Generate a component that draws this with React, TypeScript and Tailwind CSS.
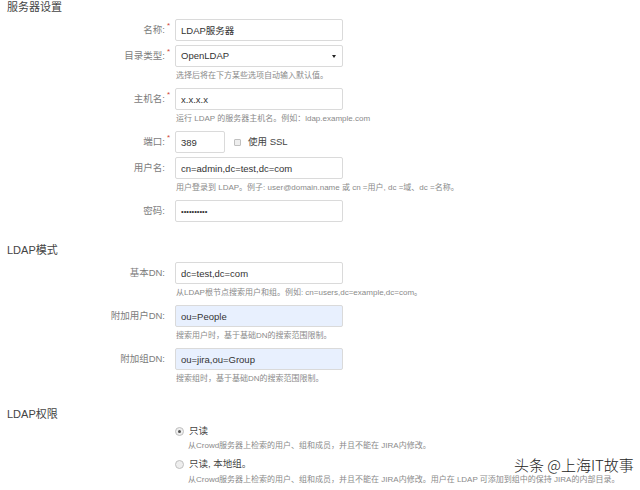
import React from "react";

type FieldProps = {
  label: string;
  required?: boolean;
  hint?: string;
  children: React.ReactNode;
};

const Field = ({ label, required, hint, children }: FieldProps) => {
  return (
    <div>
      <div className="flex h-[22px] items-center">
        <div className="w-[165px] text-right text-[9.5px] text-[#7c7c7c]">{label}</div>
        <div className="h-full w-[10px] self-start">
          {required && (
            <span className="ml-[2px] block pt-[3px] text-[8px] leading-none text-[#d04437]">*</span>
          )}
        </div>
        {children}
      </div>
      {hint && (
        <div className="h-[17px] whitespace-nowrap pl-[176px] text-[8px] leading-[17px] text-[#8a8a8a]">
          {hint}
        </div>
      )}
    </div>
  );
};

const TextInput = ({
  value,
  width = "w-[168px]",
  autofill,
  type = "text",
  size = "text-[9.5px]",
}: {
  value: string;
  width?: string;
  autofill?: boolean;
  type?: string;
  size?: string;
}) => (
  <input
    readOnly
    type={type}
    defaultValue={value}
    className={`${width} ${size} h-[22px] rounded-[2px] border border-[#dadada] pl-[5px] text-[#333] outline-none ${
      autofill ? "bg-[#e8f0fe]" : "bg-white"
    }`}
  />
);

const Heading = ({ children, className = "" }: { children: React.ReactNode; className?: string }) => (
  <div className={`h-[15px] pl-[7px] text-[11px] leading-[15px] text-[#444] ${className}`}>{children}</div>
);

const Radio = ({ checked, label }: { checked?: boolean; label: string }) => (
  <div className="flex h-[14px] items-center pl-[175px]">
    <span className="flex h-[9px] w-[9px] items-center justify-center rounded-full border border-[#c0c0c0] bg-[#eeeeee]">
      {checked && <span className="h-[3px] w-[3px] rounded-full bg-[#555]" />}
    </span>
    <span className="ml-[5px] text-[9.5px] text-[#444]">{label}</span>
  </div>
);

export default function App() {
  return (
    <div className="relative h-[490px] w-[640px] overflow-hidden bg-white font-['Liberation_Sans','Noto_Sans_CJK_SC',sans-serif]">
      <Heading>服务器设置</Heading>
      <div className="mt-[4px] flex flex-col gap-[4px]">
        <Field label="名称:" required>
          <TextInput value="LDAP服务器" />
        </Field>
        <Field label="目录类型:" required hint="选择后将在下方某些选项自动输入默认值。">
          <div className="flex h-[22px] w-[168px] items-center justify-between rounded-[2px] border border-[#dadada] bg-white pl-[5px] pr-[6px] text-[9.5px] text-[#333]">
            <span>OpenLDAP</span>
            <span className="h-0 w-0 border-l-[2.5px] border-r-[2.5px] border-t-[3.5px] border-l-transparent border-r-transparent border-t-[#222]" />
          </div>
        </Field>
        <Field label="主机名:" required hint="运行 LDAP 的服务器主机名。例如：ldap.example.com">
          <TextInput value="x.x.x.x" />
        </Field>
        <Field label="端口:" required>
          <TextInput value="389" width="w-[50px]" />
          <span className="ml-[9px] h-[7px] w-[7px] rounded-[1px] border border-[#c0c0c0] bg-[#eeeeee]" />
          <span className="ml-[7px] text-[9.5px] text-[#444]">使用 SSL</span>
        </Field>
        <Field label="用户名:" hint="用户登录到 LDAP。例子: user@domain.name 或 cn =用户, dc =域、dc =名称。">
          <TextInput value="cn=admin,dc=test,dc=com" />
        </Field>
        <Field label="密码:">
          <TextInput value="1234567890" type="password" size="text-[7.5px]" />
        </Field>
      </div>

      <Heading className="mt-[21px]">LDAP模式</Heading>
      <div className="mt-[4px] flex flex-col gap-[4px]">
        <Field label="基本DN:" hint="从LDAP根节点搜索用户和组。例如: cn=users,dc=example,dc=com。">
          <TextInput value="dc=test,dc=com" />
        </Field>
        <Field label="附加用户DN:" hint="搜索用户时，基于基础DN的搜索范围限制。">
          <TextInput value="ou=People" autofill />
        </Field>
        <Field label="附加组DN:" hint="搜索组时，基于基础DN的搜索范围限制。">
          <TextInput value="ou=jira,ou=Group" autofill />
        </Field>
      </div>

      <Heading className="mt-[20px]">LDAP权限</Heading>
      <div className="mt-[2px]">
        <Radio checked label="只读" />
        <div className="mt-[1px] h-[14px] whitespace-nowrap pl-[188px] text-[8px] leading-[14px] text-[#8a8a8a]">
          从Crowd服务器上检索的用户、组和成员，并且不能在 JIRA内修改。
        </div>
        <div className="mt-[4px]">
          <Radio label="只读, 本地组。" />
        </div>
        <div className="mt-[2px] h-[14px] whitespace-nowrap pl-[188px] text-[8px] leading-[14px] text-[#8a8a8a]">
          从Crowd服务器上检索的用户、组和成员，并且不能在 JIRA内修改。用户在 LDAP 可添加到组中的保持 JIRA的内部目录。
        </div>
      </div>

      <div className="absolute left-[514px] top-[455px] whitespace-nowrap font-['Noto_Sans_CJK_SC',sans-serif] text-[15px] font-light leading-[20px] text-[#222] [text-shadow:0_0_2px_#fff,0_0_2px_#fff,0_0_3px_#fff]">
        头条 @上海IT故事
      </div>
    </div>
  );
}
